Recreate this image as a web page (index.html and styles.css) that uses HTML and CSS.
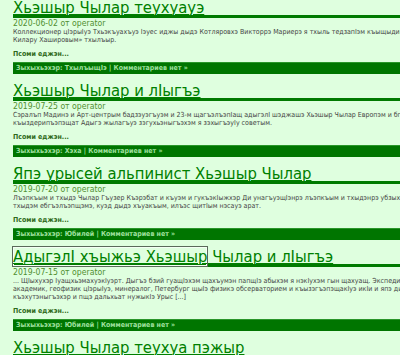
FILE: index.html
```html
<!DOCTYPE html>
<html>
<head>
<meta charset="utf-8">
<link rel="stylesheet" href="styles.css">
</head>
<body>
<div class="page">
  <div class="post">
    <h2 class="title"><a href="#">Хьэшыр Чылар теухуауэ</a></h2>
    <div class="meta">2020-06-02 от operator</div>
    <p class="entry">Коллекционер цIэрыIуэ Тхьэкъуахъуэ Iэуес иджы дыдэ Котляровхэ Викторрэ Мариерэ я тхыль тедзапIэм къыщыдигъэкIащ «Къэбэрдей уэрэдусхэр,<br>Килару Хашировым» тхылъыр.</p>
    <p class="more"><a href="#">Псоми еджэн...</a></p>
    <div class="bar">Зыхыхьэхэр: ТхылъыщIэ | Комментариев нет »</div>
  </div>
  <div class="post">
    <h2 class="title"><a href="#">Хьэшыр Чылар и лIыгъэ</a></h2>
    <div class="meta">2019-07-25 от operator</div>
    <p class="entry">Сэралъп Мадинэ и Арт-центрым бадзэуэгъуэм и 23-м щагъэлъэпIащ адыгэлI шэджашэ Хьэшыр Чылар Европэм и бгы нэхъ лъагэ Iуащхьэмахуэ<br>къыздерипъэпэщат Адыгэ жылагъуэ зэгухьэныгъэхэм я зэхыгъэуIу советым.</p>
    <p class="more"><a href="#">Псоми еджэн...</a></p>
    <div class="bar">Зыхыхьэхэр: Хэха | Комментариев нет »</div>
  </div>
  <div class="post">
    <h2 class="title"><a href="#">Япэ урысей альпинист Хьэшыр Чылар</a></h2>
    <div class="meta">2019-07-20 от operator</div>
    <p class="entry">Лъэпкъым и тхыдэ Чылар Гъузер Къэрэбат и къуэм и гукъэкIыжхэр Ди унагъуэщIэнрэ лъэпкъым и тхыдэнрэ убзыхуауэ щыIэу къыщIэкIынукъым<br>тхыдэм ебгъэлъэпщэмэ, куэд дыдэ хъуакъым, илъэс щитIым нэсауэ арат.</p>
    <p class="more"><a href="#">Псоми еджэн...</a></p>
    <div class="bar">Зыхыхьэхэр: Юбилей | Комментариев нет »</div>
  </div>
  <div class="post">
    <h2 class="title"><a href="#"><span class="focus">АдыгэлI хъыжьэ Хьэшыр</span> Чылар и лIыгъэ</a></h2>
    <div class="meta">2019-07-15 от operator</div>
    <p class="entry">... ЩIыхухэр IуащхьэмахуэкIуэрт. Дыгъэ бзий гуащIэхэм щахъумэн папщIэ абыхэм я нэкIухэм гын щахуащ. Экспедицэм и унафэщIыр<br>академик, геофизик цIэрыIуэ, минералог, Петербург щыIэ физикэ обсерваторием и къызэгъэпэщакIуэ икIи и япэ директор Купфер А. Я. арат,<br>къэхутэныгъэхэр и пщэ дальхьат нужыкIэ Урыс [...]</p>
    <p class="more"><a href="#">Псоми еджэн...</a></p>
    <div class="bar">Зыхыхьэхэр: Юбилей | Комментариев нет »</div>
  </div>
  <div class="post">
    <h2 class="title"><a href="#">Хьэшыр Чылар теухуа пэжыр</a></h2>
  </div>
</div>
</body>
</html>
```
FILE: styles.css
```css
html, body {
  margin: 0;
  padding: 0;
  background: #dfffdf;
  overflow: hidden;
}
.page {
  width: 700px;
  padding: 0 0 0 13px;
  font-family: "DejaVu Sans Condensed", "DejaVu Sans", sans-serif;
  font-stretch: condensed;
}
.post {
  margin-bottom: 9px;
}
.title {
  margin: 0;
  font-family: "DejaVu Sans Condensed", "DejaVu Sans", sans-serif;
  font-stretch: condensed;
  font-weight: normal;
  font-size: 16.5px;
  line-height: 15px;
  border-bottom: 3px solid #007a00;
}
.title a {
  color: #008000;
  text-decoration: underline;
  text-decoration-thickness: 1px;
}
.focus {
  outline: 1px solid #5a6a5a;
  box-shadow: inset 0 0 0 1px #f4fff4;
}
.meta {
  margin-top: 1px;
  font-size: 8.6px;
  line-height: 9px;
  color: #4f8f2f;
}
.entry {
  margin: 0;
  font-size: 7px;
  line-height: 8px;
  color: #444;
  white-space: nowrap;
}
.more {
  margin: 6px 0 0;
  font-size: 7px;
  line-height: 8px;
  font-weight: bold;
}
.more a {
  color: #2f6a1a;
  text-decoration: none;
}
.bar {
  margin-top: 4px;
  height: 12px;
  box-sizing: border-box;
  padding-left: 3px;
  background: #007500;
  border-top: 1px solid #2a962a;
  color: #9fe09f;
  font-size: 7px;
  line-height: 11px;
  font-weight: bold;
  white-space: nowrap;
}
```
